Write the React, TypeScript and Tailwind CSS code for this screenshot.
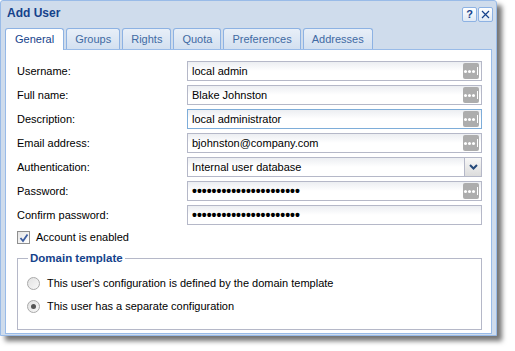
import React from 'react'

const font = { fontFamily: '"Liberation Sans", Arial, sans-serif' }

const tabs = ['General', 'Groups', 'Rights', 'Quota', 'Preferences', 'Addresses']

const EllipsisButton = () => (
	<div className="absolute right-[2px] top-[1px] w-[16px] h-[16px] rounded-[2px] bg-[#adadad] flex items-center justify-center gap-[1px]">
		<span className="w-[3px] h-[3px] bg-white rounded-full" />
		<span className="w-[3px] h-[3px] bg-white rounded-full" />
		<span className="w-[3px] h-[3px] bg-white rounded-full" />
		<span className="w-[1px] h-[8px] bg-white ml-[1px]" />
	</div>
)

const Field = ({
	value,
	button = 'dots',
	focused = false,
	password = false,
}: {
	value: string
	button?: 'dots' | 'select' | 'none'
	focused?: boolean
	password?: boolean
}) => (
	<div
		className={`relative h-[20px] border ${focused ? 'border-[#7eadd9]' : 'border-[#b5b8c8]'} bg-gradient-to-b from-[#eceef2] via-white to-white flex items-center pl-[4px]`}
	>
		<span className={password ? 'text-[14px] font-bold text-black leading-none' : 'text-[11px] text-black'}>{value}</span>
		{button === 'dots' && <EllipsisButton />}
		{button === 'select' && (
			<div className="absolute right-0 top-0 w-[17px] h-full border-l border-[#b5b8c8] bg-gradient-to-b from-[#f7f7f7] to-[#dcdcdc] flex items-center justify-center">
				<svg width="9" height="6" viewBox="0 0 9 6">
					<path d="M1 1 L4.5 4.5 L8 1" stroke="#24497a" strokeWidth="2" fill="none" />
				</svg>
			</div>
		)}
	</div>
)

const rows: { label: string; value: string; button?: 'dots' | 'select' | 'none'; focused?: boolean; password?: boolean }[] = [
	{ label: 'Username:', value: 'local admin' },
	{ label: 'Full name:', value: 'Blake Johnston' },
	{ label: 'Description:', value: 'local administrator', focused: true },
	{ label: 'Email address:', value: 'bjohnston@company.com' },
	{ label: 'Authentication:', value: 'Internal user database', button: 'select' },
	{ label: 'Password:', value: '••••••••••••••••••••••', password: true },
	{ label: 'Confirm password:', value: '••••••••••••••••••••••', password: true, button: 'none' },
]

const Radio = ({ checked }: { checked?: boolean }) => (
	<span className="w-[13px] h-[13px] rounded-full border border-[#a9a9a9] bg-gradient-to-br from-[#e2e2e2] to-[#f8f8f8] flex items-center justify-center">
		{checked && <span className="w-[5px] h-[5px] rounded-full bg-[#555]" />}
	</span>
)

export default function App() {
	return (
		<div className="w-[515px] h-[351px] bg-white" style={font}>
			<div className="w-[497px] h-[336px] bg-[#cfdcec] border border-[#99bbe8] rounded-t-[3px] shadow-[5px_5px_5px_rgba(0,0,0,0.55)] flex flex-col overflow-hidden">
				<div className="h-[24px] shrink-0 flex items-center justify-between pl-[6px] pr-[3px]">
					<span className="text-[12px] font-bold text-[#15428b]">Add User</span>
					<div className="flex gap-[1px] mt-[2px]">
						<div className="w-[15px] h-[15px] border border-[#8db2e3] rounded-[2px] bg-gradient-to-b from-white to-[#dfe9f5] flex items-center justify-center text-[11px] font-bold text-[#15428b] leading-none">
							?
						</div>
						<div className="w-[15px] h-[15px] border border-[#8db2e3] rounded-[2px] bg-gradient-to-b from-white to-[#dfe9f5] flex items-center justify-center">
							<svg width="9" height="9" viewBox="0 0 9 9">
								<path d="M1 1 L8 8 M8 1 L1 8" stroke="#15428b" strokeWidth="1.2" />
							</svg>
						</div>
					</div>
				</div>
				<div className="flex-1 min-h-0 flex flex-col px-[4px] pb-[1px]">
					<div className="h-[24px] shrink-0 flex items-end gap-[2px]">
						{tabs.map((tab, i) => (
							<div
								key={tab}
								className={`flex items-center border border-b-0 rounded-t-[3px] text-[11px] ${
									i === 0
										? 'px-[9px] bg-white border-[#8db2e3] text-[#15428b] h-[22px] -mb-[1px] relative z-10'
										: 'px-[8px] h-[21px] bg-gradient-to-b from-[#e8eff8] to-[#d3e0f0] border-[#8db2e3] text-[#416aa3]'
								}`}
							>
								{tab}
							</div>
						))}
					</div>
					<div className="flex-1 bg-white border border-[#99bbe8] pl-[11px] pr-[9px] pt-[11px]">
						<div className="flex flex-col gap-[4px]">
							{rows.map((r) => (
								<div key={r.label} className="flex items-center">
									<span className="w-[170px] text-[11px] text-black">{r.label}</span>
									<div className="flex-1">
										<Field value={r.value} button={r.button} focused={r.focused} password={r.password} />
									</div>
								</div>
							))}
						</div>
						<div className="flex items-center gap-[6px] mt-[6px] h-[13px]">
							<span className="w-[13px] h-[13px] border border-[#8f8f8f] bg-gradient-to-br from-[#e4e4e4] to-white flex items-center justify-center">
								<svg width="10" height="10" viewBox="0 0 10 10">
									<path d="M1.5 5 L4 8 L8.5 1.5" stroke="#3c5da0" strokeWidth="1.8" fill="none" />
								</svg>
							</span>
							<span className="text-[11px] leading-[13px] text-black">Account is enabled</span>
						</div>
						<fieldset className="mt-[7px] border border-[#b5b8c8] px-[9px] pb-[16px] pt-[12px]">
							<legend className="px-[2px] ml-[1px] text-[11.5px] leading-[14px] font-bold text-[#15428b]">Domain template</legend>
							<div className="flex flex-col gap-[10px]">
								<div className="flex items-center gap-[7px] h-[13px]">
									<Radio />
									<span className="text-[11px] leading-[13px] text-black">This user's configuration is defined by the domain template</span>
								</div>
								<div className="flex items-center gap-[7px] h-[13px]">
									<Radio checked />
									<span className="text-[11px] leading-[13px] text-black">This user has a separate configuration</span>
								</div>
							</div>
						</fieldset>
					</div>
				</div>
			</div>
		</div>
	)
}
